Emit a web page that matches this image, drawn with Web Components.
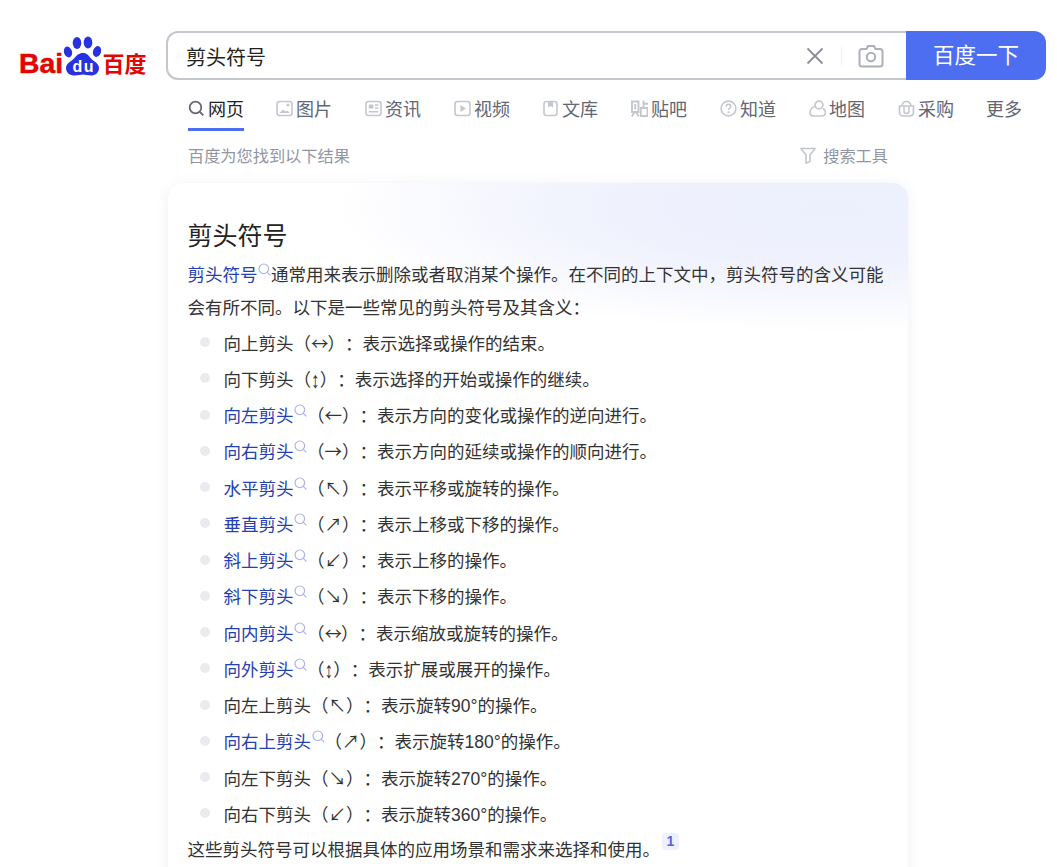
<!DOCTYPE html>
<html lang="zh">
<head>
<meta charset="utf-8">
<title>剪头符号</title>
<style>
  html, body { margin: 0; padding: 0; overflow: hidden; background: #fff; height: 867px; }
  body { font-family: "Liberation Sans", "Noto Sans CJK SC", sans-serif; color: #222; text-spacing-trim: space-all; }
</style>
</head>
<body>
<bd-page>
  <bd-logo slot="logo"></bd-logo>
  <bd-search slot="search" value="剪头符号" button="百度一下"></bd-search>
  <bd-tabs slot="tabs"></bd-tabs>
  <bd-tools slot="tools"></bd-tools>
  <bd-card slot="card" heading="剪头符号">
    <p><bd-term>剪头符号</bd-term>通常用来表示删除或者取消某个操作。在不同的上下文中，剪头符号的含义可能<br>会有所不同。以下是一些常见的剪头符号及其含义：</p>
    <bd-item>向上剪头（<bd-sym w="16.5">↔</bd-sym>）：表示选择或操作的结束。</bd-item>
    <bd-item>向下剪头（<bd-sym w="8.75" narrow>↕</bd-sym>）：表示选择的开始或操作的继续。</bd-item>
    <bd-item><bd-term>向左剪头</bd-term>（<bd-sym>←</bd-sym>）：表示方向的变化或操作的逆向进行。</bd-item>
    <bd-item><bd-term>向右剪头</bd-term>（<bd-sym>→</bd-sym>）：表示方向的延续或操作的顺向进行。</bd-item>
    <bd-item><bd-term>水平剪头</bd-term>（<bd-sym>↖</bd-sym>）：表示平移或旋转的操作。</bd-item>
    <bd-item><bd-term>垂直剪头</bd-term>（<bd-sym>↗</bd-sym>）：表示上移或下移的操作。</bd-item>
    <bd-item><bd-term>斜上剪头</bd-term>（<bd-sym>↙</bd-sym>）：表示上移的操作。</bd-item>
    <bd-item><bd-term>斜下剪头</bd-term>（<bd-sym>↘</bd-sym>）：表示下移的操作。</bd-item>
    <bd-item><bd-term>向内剪头</bd-term>（<bd-sym w="16.5">↔</bd-sym>）：表示缩放或旋转的操作。</bd-item>
    <bd-item><bd-term>向外剪头</bd-term>（<bd-sym w="8.75" narrow>↕</bd-sym>）：表示扩展或展开的操作。</bd-item>
    <bd-item>向左上剪头（<bd-sym>↖</bd-sym>）：表示旋转90°的操作。</bd-item>
    <bd-item><bd-term>向右上剪头</bd-term>（<bd-sym>↗</bd-sym>）：表示旋转180°的操作。</bd-item>
    <bd-item>向左下剪头（<bd-sym>↘</bd-sym>）：表示旋转270°的操作。</bd-item>
    <bd-item>向右下剪头（<bd-sym>↙</bd-sym>）：表示旋转360°的操作。</bd-item>
    <p class="end">这些剪头符号可以根据具体的应用场景和需求来选择和使用。<bd-ref>1</bd-ref></p>
  </bd-card>
</bd-page>

<script>
// small helper, every element gets an open shadow root
function shadow(el, html) {
  el.attachShadow({ mode: 'open' }).innerHTML = html.trim();
}

const FONT = `"Liberation Sans", "Noto Sans CJK SC", sans-serif`;

class BdPage extends HTMLElement {
  constructor() {
    super();
    shadow(this, `
      <style>
        :host { display: grid; grid-template-columns: 166px 740px 1fr; width: 1057px; font-family: ${FONT}; }
        .logo { grid-column: 1; grid-row: 1; padding: 31px 0 0 20px; }
        .main { grid-column: 2; grid-row: 1; }
      </style>
      <div class="logo"><slot name="logo"></slot></div>
      <div class="main">
        <slot name="search"></slot>
        <slot name="tabs"></slot>
        <slot name="tools"></slot>
        <slot name="card"></slot>
      </div>
    `);
  }
}

class BdLogo extends HTMLElement {
  constructor() {
    super();
    shadow(this, `
      <style>
        :host { display: block; width: 128px; height: 48px; }
        svg { display: block; }
        text { font-weight: 700; fill: #e10601; }
      </style>
      <svg width="128" height="48" viewBox="0 0 128 48">
        <text x="-1" y="42" font-family="Liberation Sans" font-size="28" stroke="#e10601" stroke-width=".5" textLength="44" lengthAdjust="spacingAndGlyphs">Bai</text>
        <text x="82.500" y="41" font-family="Noto Sans CJK SC" font-size="22" textLength="44" lengthAdjust="spacingAndGlyphs">百度</text>
        <g fill="#2932e1">
          <ellipse cx="48" cy="21" rx="4" ry="5.500" transform="rotate(-18 48 21)"/>
          <ellipse cx="57" cy="12" rx="4.300" ry="6"/>
          <ellipse cx="68" cy="11.500" rx="4.300" ry="6"/>
          <ellipse cx="77" cy="20.500" rx="4" ry="5.500" transform="rotate(18 77 20.500)"/>
          <path d="M63 22c4 0 5.500 2.500 7.500 5 2.500 3 8.500 5 8.500 10 0 5-4 7.500-8 7.500-3 0-5.500-1-8-1s-5 1-8 1c-5 0-9-2.500-9-7.500 0-5 6-7 8.500-10 2-2.500 4.500-5 8.500-5z"/>
        </g>
        <text x="52.500" y="41" font-family="Liberation Sans" font-size="16" style="fill:#fff" textLength="21">du</text>
      </svg>
    `);
  }
}

class BdSearch extends HTMLElement {
  constructor() {
    super();
    shadow(this, `
      <style>
        :host { display: block; padding-top: 31px; }
        .wrap { display: flex; width: 880px; height: 49px; }
        .box {
          flex: 0 0 740px; box-sizing: border-box; height: 49px; border: 2px solid #c4c7ce; border-right: 0;
          border-radius: 12px 0 0 12px; display: flex; align-items: center; padding-left: 18px;
        }
        .q { flex: 1; font-size: 20px; color: #222; padding-top: 2px; }
        .x { margin-right: 16px; display: block; }
        .sep { width: 1px; height: 18px; background: #f0f0f3; margin-right: 16px; }
        .cam { margin-right: 22px; display: block; }
        button {
          flex: 0 0 140px; height: 49px; border: 0; margin: 0; padding: 0 0 4px; background: #4e6ef2; color: #fff;
          border-radius: 0 12px 12px 0; font: 21.500px ${FONT};
        }
      </style>
      <div class="wrap">
        <div class="box">
          <span class="q">${this.getAttribute('value')}</span>
          <svg class="x" width="20" height="20" viewBox="0 0 20 20" fill="none" stroke="#8e8e9b" stroke-width="1.800"><path d="M2.500 2.500l15 15M17.500 2.500l-15 15"/></svg>
          <span class="sep"></span>
          <svg class="cam" width="26" height="24" viewBox="0 0 26 24" fill="none" stroke="#adb0bb" stroke-width="2"><path d="M8.500 5l1.500-3h6l1.500 3H22a2.500 2.500 0 0 1 2.500 2.500V20a2.500 2.500 0 0 1-2.500 2.500H4A2.500 2.500 0 0 1 1.500 20V7.500A2.500 2.500 0 0 1 4 5z"/><circle cx="13" cy="13" r="4.200"/></svg>
        </div>
        <button>${this.getAttribute('button')}</button>
      </div>
    `);
  }
}

const C = '#c4c7ce';
const TAB_ICONS = {
  web: `<circle cx="7.500" cy="7.500" r="5.800" stroke="#626675" stroke-width="1.800" fill="none"/><path d="M11.800 11.800l3.500 3.500" stroke="#626675" stroke-width="1.800"/>`,
  pic: `<rect x="1" y="1.500" width="15" height="14" rx="2.500" stroke="${C}" stroke-width="1.600" fill="none"/><path d="M3.500 13l3.500-3.500 2.500 2 2-1 2 2.500z" fill="${C}"/><circle cx="12" cy="5" r="1.500" fill="${C}"/>`,
  news: `<rect x="1" y="1.500" width="15" height="14" rx="2.500" stroke="${C}" stroke-width="1.600" fill="none"/><rect x="3.800" y="4.500" width="4.500" height="4" fill="${C}"/><path d="M10 5h3.500M10 8h3.500M3.800 11.800h9.700" stroke="${C}" stroke-width="1.500"/>`,
  video: `<rect x="1" y="1.500" width="15" height="14" rx="2.500" stroke="${C}" stroke-width="1.600" fill="none"/><path d="M6.500 5l5.500 3.500-5.500 3.500z" fill="${C}"/>`,
  lib: `<rect x="1" y="1.500" width="13" height="14" rx="2.500" stroke="${C}" stroke-width="1.600" fill="none"/><path d="M5 1.500h5v6l-2.500-1.500L5 7.500z" fill="${C}"/>`,
  tie: `<path d="M1 1.500h6.500v10.500H1zM4.200 4v5.500M3.500 12L.8 16.500M5 12l2.700 4.500" stroke="${C}" stroke-width="1.900" fill="none"/><path d="M12.500 .5v7.500M12.500 3.800h4.500M9.800 8h6.700v8H9.800z" stroke="${C}" stroke-width="1.900" fill="none"/>`,
  ask: `<circle cx="8.500" cy="8.500" r="7.400" stroke="${C}" stroke-width="1.600" fill="none"/><path d="M6.200 6.500c0-3 4.600-3 4.600 0 0 1.800-2.300 1.800-2.300 3.500" stroke="${C}" stroke-width="1.500" fill="none"/><circle cx="8.500" cy="12.300" r="1" fill="${C}"/>`,
  map: `<circle cx="10" cy="5" r="3.900" stroke="${C}" stroke-width="1.700" fill="none"/><path d="M6.500 6.500C3.500 7 1 9.500 1 12.500 1 14.500 2.500 16 4.500 16H13c2 0 3.500-1.500 3.500-3.500 0-1.500-1-3-2.500-4" stroke="${C}" stroke-width="1.700" fill="none"/>`,
  buy: `<path d="M1.500 6h14v6.500a3.500 3.500 0 0 1-3.500 3.500H5a3.500 3.500 0 0 1-3.500-3.500z" stroke="${C}" stroke-width="1.700" fill="none"/><path d="M4 6C4.500 0 12.500 0 13 6M6 6v5a2.500 2.500 0 0 0 5 0V6" stroke="${C}" stroke-width="1.500" fill="none"/>`
};

class BdTabs extends HTMLElement {
  constructor() {
    super();
    const tabs = [
      ['web', '网页'], ['pic', '图片'], ['news', '资讯'], ['video', '视频'], ['lib', '文库'],
      ['tie', '贴吧'], ['ask', '知道'], ['map', '地图'], ['buy', '采购'], ['', '更多']
    ];
    const html = tabs.map(([k, t], i) => `
      <a class="${i === 0 ? 'on' : ''}">
        ${k ? `<svg width="17" height="17" viewBox="0 0 17 17">${TAB_ICONS[k]}</svg>` : ''}<span>${t}</span>
      </a>`).join('');
    shadow(this, `
      <style>
        :host { display: block; padding: 0 0 0 22px; width: 860px; }
        nav { display: flex; gap: 33px; height: 61px; }
        a { display: flex; align-items: center; gap: 3px; height: 48px; padding-top: 5px; box-sizing: border-box; font-size: 18px; color: #626675; margin-top: 3px; border-bottom: 3px solid transparent; }
        a.on { color: #222; border-bottom-color: #4e6ef2; margin-right: -1px; }
        a:nth-child(5) { gap: 2px; }
        a:last-child { margin-left: -1px; }
        svg { display: block; flex: none; }
      </style>
      <nav>${html}</nav>
    `);
  }
}

class BdTools extends HTMLElement {
  constructor() {
    super();
    shadow(this, `
      <style>
        :host { display: flex; justify-content: space-between; align-items: center; width: 700px; margin-left: 22px; height: 28px; font-size: 16.200px; color: #9195a3; }
        .f { display: flex; align-items: center; gap: 7px; }
        svg { display: block; }
      </style>
      <span>百度为您找到以下结果</span>
      <span class="f">
        <svg width="16" height="17" viewBox="0 0 16 17" fill="none" stroke="#c4c7ce" stroke-width="1.600"><path d="M1 1.500h14L10 8v6.500l-4 1.500V8z"/></svg>
        搜索工具
      </span>
    `);
  }
}

class BdCard extends HTMLElement {
  constructor() {
    super();
    shadow(this, `
      <style>
        :host {
          display: block; box-sizing: border-box; width: 740px; margin: 14px 0 0 2px; padding: 33px 20px 40px 19.500px;
          border-radius: 16px; box-shadow: 0 2px 14px rgba(80, 90, 130, .09);
          background:
            radial-gradient(ellipse 500px 125px at 90% 25px, #ecf0fd 0%, #eff1fd 45%, rgba(255, 255, 255, 0) 100%),
            #fff;
        }
        h2 { margin: 0 0 3px; font-weight: 400; font-size: 25px; line-height: 40px; color: #222; }
        ::slotted(p) { margin: 0 0 -1px; font-size: 17.500px; line-height: 33px; color: #333; }
        ::slotted(p.end) { margin-top: 0; line-height: 36px; }
      </style>
      <h2>${this.getAttribute('heading')}</h2>
      <slot></slot>
    `);
  }
}

class BdItem extends HTMLElement {
  constructor() {
    super();
    shadow(this, `
      <style>
        :host { display: flex; align-items: center; height: 36.250px; font-size: 17.500px; color: #333; padding-left: 12px; white-space: nowrap; }
        i { width: 10px; height: 10px; border-radius: 50%; background: #eaebef; margin-right: 14px; flex: none; }
      </style>
      <i></i><span><slot></slot></span>
    `);
  }
}

class BdSym extends HTMLElement {
  constructor() {
    super();
    const narrow = this.hasAttribute('narrow');
    shadow(this, `
      <style>
        :host {
          display: inline-block; width: ${this.getAttribute('w') || 17.5}px; text-align: center; line-height: 1;
          font-family: ${narrow ? '"Liberation Sans"' : '"Noto Sans CJK SC"'}, sans-serif;
          font-size: 17.5px; ${narrow ? 'transform: scaleY(1.3);' : ''}
        }
      </style>
      <slot></slot>
    `);
  }
}

class BdTerm extends HTMLElement {
  constructor() {
    super();
    shadow(this, `
      <style>
        :host { display: inline; color: #2440b3; white-space: nowrap; }
        svg { vertical-align: 5px; margin-left: .5px; }
      </style>
      <slot></slot><svg width="13" height="13" viewBox="0 0 13 13" fill="none" stroke="#a9b4e6" stroke-width="1.200"><circle cx="5.800" cy="5.800" r="4.800"/><path d="M9.300 9.300l3 3"/></svg>
    `);
  }
}

class BdRef extends HTMLElement {
  constructor() {
    super();
    shadow(this, `
      <style>
        :host { display: inline-block; width: 17px; height: 17px; line-height: 17px; border-radius: 4px; background: #eff0fd; color: #5f5fe8; font-size: 14px; text-align: center; vertical-align: 10px; margin-left: 2px; font-weight: 700; }
      </style>
      <slot></slot>
    `);
  }
}

customElements.define('bd-page', BdPage);
customElements.define('bd-logo', BdLogo);
customElements.define('bd-search', BdSearch);
customElements.define('bd-tabs', BdTabs);
customElements.define('bd-tools', BdTools);
customElements.define('bd-card', BdCard);
customElements.define('bd-item', BdItem);
customElements.define('bd-sym', BdSym);
customElements.define('bd-term', BdTerm);
customElements.define('bd-ref', BdRef);
</script>
</body>
</html>
